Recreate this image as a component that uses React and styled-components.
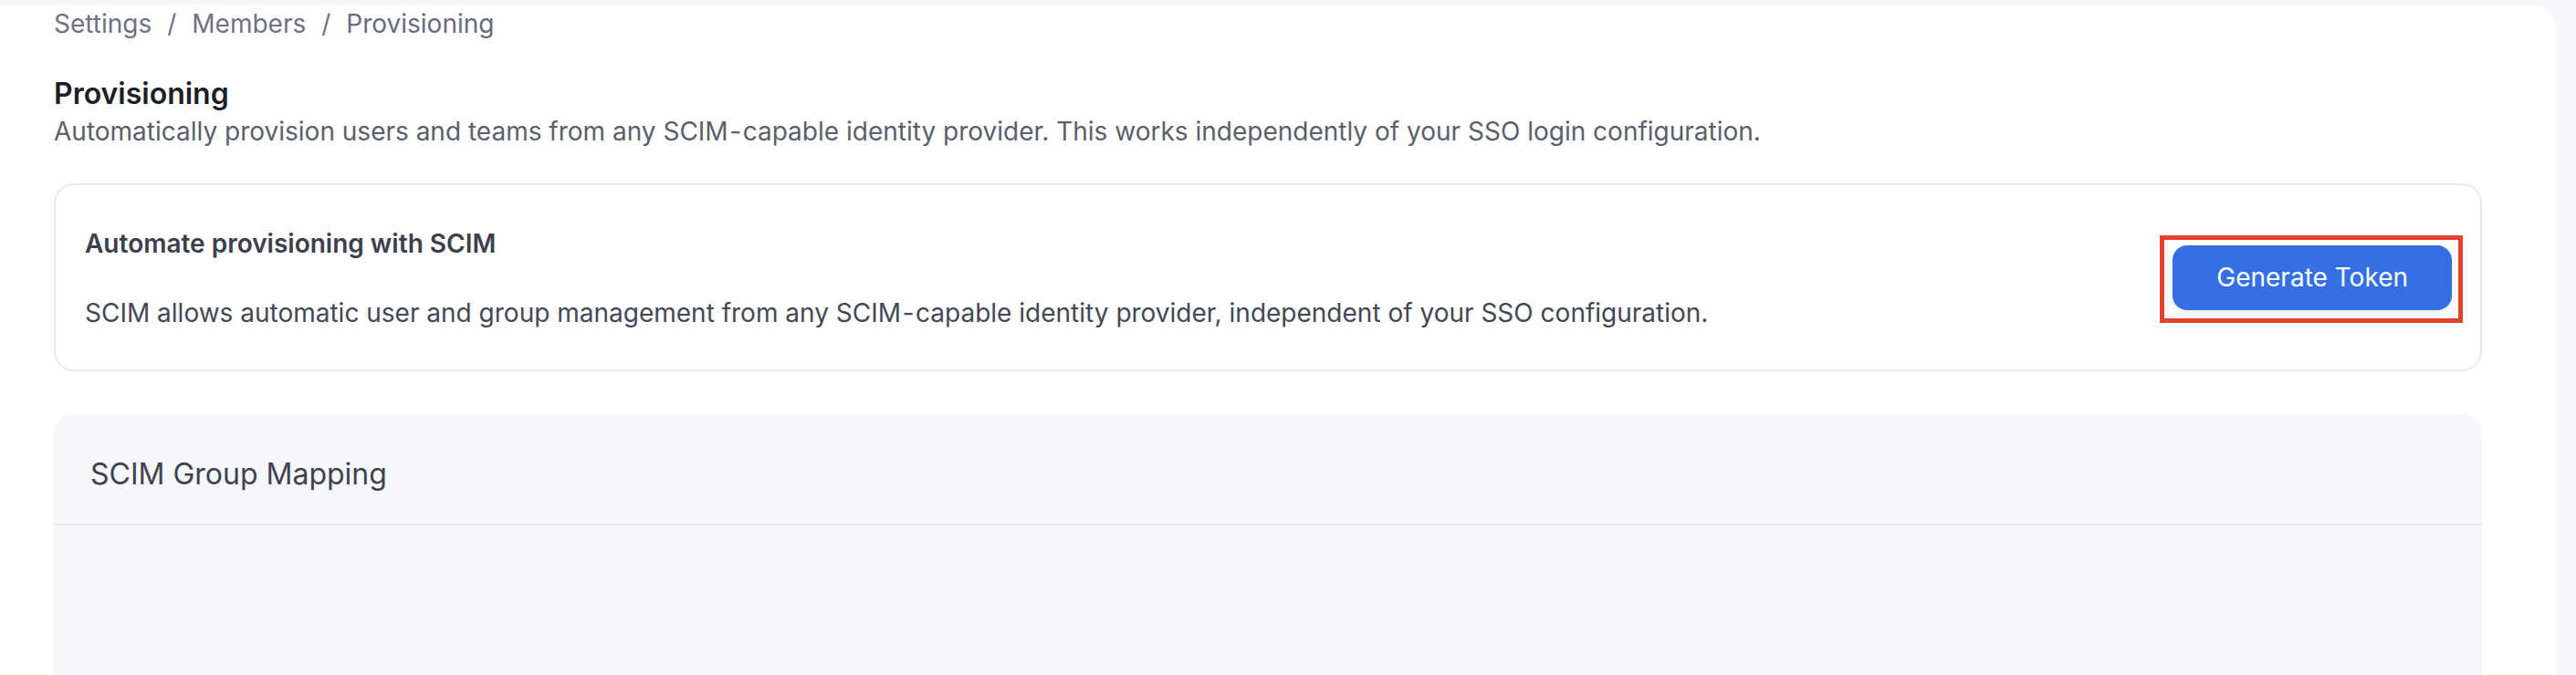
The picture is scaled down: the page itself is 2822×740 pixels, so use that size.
import React from "react";
import styled, { createGlobalStyle } from "styled-components";

const GlobalStyle = createGlobalStyle`
  html, body {
    margin: 0;
    padding: 0;
    background: #f6f7fb;
    overflow: hidden;
  }
  body {
    font-family: Inter, "Noto Sans", "Liberation Sans", sans-serif;
    -webkit-font-smoothing: antialiased;
  }
  * { box-sizing: border-box; }
`;

const Shell = styled.div`
  height: 740px;
  padding: 6px 22px 0 0;
`;

const Panel = styled.main`
  height: 100%;
  background: #ffffff;
  border-top-right-radius: 24px;
  padding: 0 81px 0 59px;
  display: flex;
  flex-direction: column;
`;

const Breadcrumb = styled.nav`
  display: flex;
  align-items: center;
  font-size: 28px;
  line-height: 40px;
  color: #6f7284;
`;

const Crumb = styled.span`
  color: ${(p) => (p.$current ? "#676b7c" : "#6f7284")};
`;

const Sep = styled.span`
  padding: 0 17px;
  color: #6f7284;
`;

const Heading = styled.h1`
  margin: 37px 0 0;
  font-size: 32px;
  line-height: 40px;
  font-weight: 600;
  color: #1c1f27;
`;

const Subtitle = styled.p`
  margin: 1px 0 0;
  font-size: 28px;
  line-height: 40px;
  color: #5a5f6c;
`;

/* non-breaking hyphen, set a little apart from its neighbours */
const Hyphen = styled.span`
  margin: 0 3px;
`;

const Card = styled.section`
  margin-top: 37px;
  display: flex;
  justify-content: space-between;
  border: 2px solid #e7e9f0;
  border-radius: 22px;
  padding: 0 31px 0 32px;
  background: #ffffff;
`;

const CardText = styled.div`
  display: flex;
  flex-direction: column;
  gap: 36px;
  padding: 44px 0 42px;
`;

const CardTitle = styled.h2`
  margin: 0;
  font-size: 28px;
  line-height: 40px;
  font-weight: 600;
  color: #3b404c;
`;

const CardBody = styled.p`
  margin: 0;
  font-size: 28px;
  line-height: 40px;
  color: #434855;
`;

const Highlight = styled.div`
  position: relative;
  align-self: center;
  display: flex;

  &::after {
    content: "";
    position: absolute;
    top: -11px;
    right: -12px;
    bottom: -14px;
    left: -14px;
    border: 5px solid #e8412b;
    pointer-events: none;
  }
`;

const PrimaryButton = styled.button`
  height: 71px;
  padding: 0 48px;
  border: none;
  border-radius: 16px;
  background: #3470e4;
  color: #ffffff;
  font-family: inherit;
  font-size: 28px;
  font-weight: 400;
  box-shadow: 0 2px 5px rgba(30, 50, 90, 0.12);
  cursor: pointer;
`;

const MappingCard = styled.section`
  margin-top: 47px;
  flex: 1;
  min-height: 400px;
  background: #f6f7fb;
  border-radius: 22px 22px 0 0;
`;

const MappingHeader = styled.header`
  padding: 44px 40px 32px;
  border-bottom: 2px solid #e4e6eb;
`;

const MappingTitle = styled.h3`
  margin: 0;
  font-size: 32px;
  line-height: 44px;
  font-weight: 400;
  color: #3e434e;
`;

const ScimCapable = () => (
  <>
    SCIM<Hyphen>‑</Hyphen>capable
  </>
);

export default function App() {
  const crumbs = ["Settings", "Members", "Provisioning"];
  return (
    <>
      <GlobalStyle />
      <Shell>
        <Panel>
          <Breadcrumb>
            {crumbs.map((c, i) => (
              <React.Fragment key={c}>
                {i > 0 && <Sep>/</Sep>}
                <Crumb $current={i === crumbs.length - 1}>{c}</Crumb>
              </React.Fragment>
            ))}
          </Breadcrumb>

          <Heading>Provisioning</Heading>
          <Subtitle>
            Automatically provision users and teams from any <ScimCapable /> identity provider. This works
            independently of your SSO login configuration.
          </Subtitle>

          <Card>
            <CardText>
              <CardTitle>Automate provisioning with SCIM</CardTitle>
              <CardBody>
                SCIM allows automatic user and group management from any <ScimCapable /> identity provider,
                independent of your SSO configuration.
              </CardBody>
            </CardText>
            <Highlight>
              <PrimaryButton type="button">Generate Token</PrimaryButton>
            </Highlight>
          </Card>

          <MappingCard>
            <MappingHeader>
              <MappingTitle>SCIM Group Mapping</MappingTitle>
            </MappingHeader>
          </MappingCard>
        </Panel>
      </Shell>
    </>
  );
}
